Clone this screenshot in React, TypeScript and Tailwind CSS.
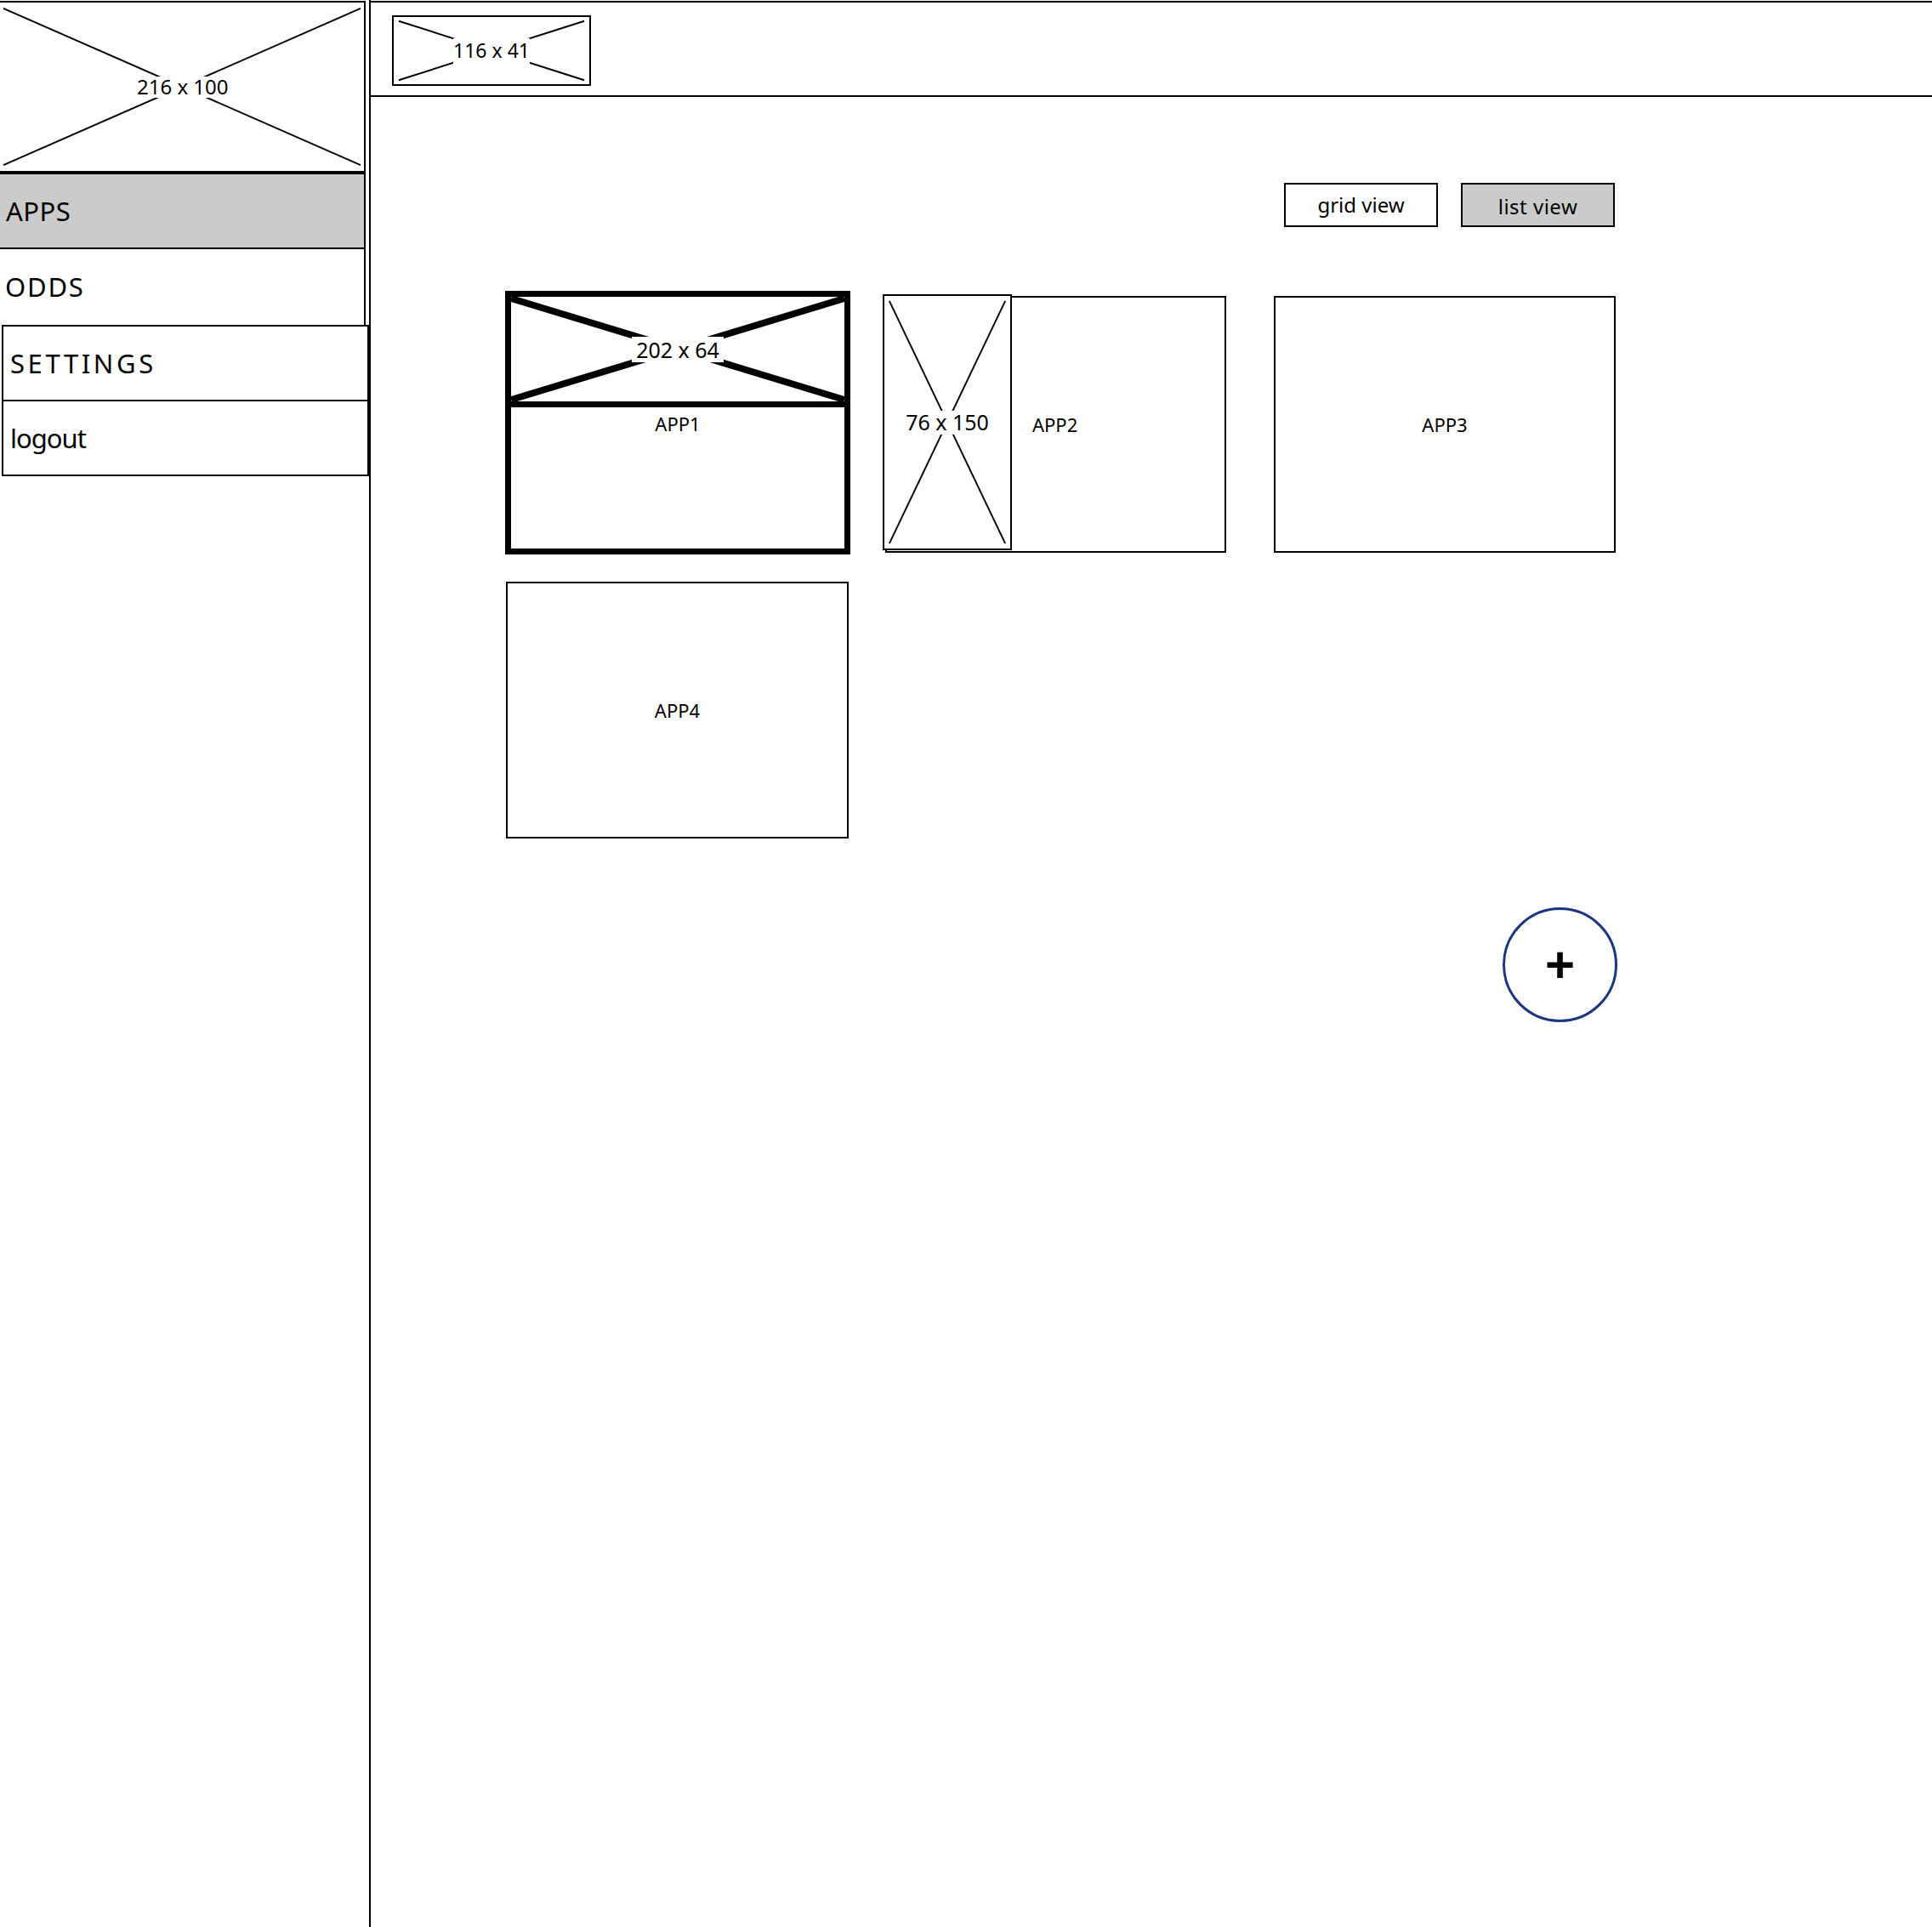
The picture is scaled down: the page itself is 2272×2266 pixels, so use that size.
import React from "react";

type PH = { w: number; h: number; ix: number; iy: number; label: string; stroke?: number; labelClass: string; boxClass: string };

function Placeholder({ w, h, ix, iy, label, stroke = 2, labelClass, boxClass }: PH) {
  return (
    <div className={`relative flex items-center justify-center shrink-0 bg-white ${boxClass}`}>
      <svg className="absolute inset-0 h-full w-full" viewBox={`0 0 ${w} ${h}`} preserveAspectRatio="none">
        <line x1={ix} y1={iy} x2={w - ix} y2={h - iy} stroke="#000" strokeWidth={stroke} />
        <line x1={w - ix} y1={iy} x2={ix} y2={h - iy} stroke="#000" strokeWidth={stroke} />
      </svg>
      <span className={`relative bg-white text-center leading-none ${labelClass}`}>{label}</span>
    </div>
  );
}

const navText = "text-[31px] leading-none text-black";

export default function App() {
  return (
    <div className="flex h-[2266px] w-[2272px] overflow-hidden bg-white text-black font-['Comic_Sans_MS','Noto_Sans',sans-serif]">
      <aside className="w-[434px] shrink-0 pt-px">
        <Placeholder
          w={428}
          h={200}
          ix={4}
          iy={7}
          label="216 x 100"
          boxClass="h-[202px] w-[430px] border-y-2 border-r-2 border-black"
          labelClass="h-[25px] w-[106px] text-[24px] whitespace-nowrap"
        />
        <div className="flex h-[90px] w-[430px] items-center border-t-2 border-r-2 border-b-2 border-black bg-[#cbcbcb] pl-[7px]">
          <span className={`${navText} tracking-[0.5px]`}>APPS</span>
        </div>
        <div className="flex h-[89px] w-[430px] items-center border-r-2 border-black pl-[6px]">
          <span className={`${navText} tracking-[1.8px]`}>ODDS</span>
        </div>
        <div className="ml-0.5 w-[432px] border-2 border-black">
          <div className="flex h-[88px] items-center border-b-2 border-black pl-2">
            <span className={`${navText} tracking-[3.6px]`}>SETTINGS</span>
          </div>
          <div className="flex h-[86px] items-center pl-2">
            <span className={`${navText} tracking-[-1px]`}>logout</span>
          </div>
        </div>
      </aside>

      <main className="flex-1 border-l-2 border-black pt-px">
        <header className="h-[113px] border-y-2 border-black pl-[25px] pt-[15px]">
          <Placeholder
            w={233}
            h={83}
            ix={6}
            iy={5}
            label="116 x 41"
            boxClass="h-[83px] w-[234px] border-2 border-black"
            labelClass="h-[30px] w-[90px] pt-[3px] text-[23px] leading-[30px] whitespace-nowrap"
          />
        </header>

        <div className="ml-[158px] w-[1308px]">
          <div className="mt-[101px] flex justify-end gap-[27px] pr-[3px]">
            <div className="flex h-[52px] w-[181px] items-center justify-center border-2 border-black text-[24px]">grid view</div>
            <div className="flex h-[52px] w-[181px] items-center justify-center border-2 border-black bg-[#cbcbcb] pt-[3px] text-[24px] tracking-[0.5px]">list view</div>
          </div>

          <div className="mt-[75px] flex items-start">
            <div className="flex h-[310px] w-[406px] flex-col border-[7px] border-black">
              <Placeholder
                w={392}
                h={125}
                ix={0}
                iy={2}
                stroke={8}
                label="202 x 64"
                boxClass="h-[130px] border-b-[7px] border-black"
                labelClass="h-[30px] w-[108px] pt-[3px] text-[25px] leading-[30px] whitespace-nowrap"
              />
              <p className="mt-[4px] text-center text-[22px] leading-[30px]">APP1</p>
            </div>

            <div className="ml-[41px] mt-[6px] flex h-[302px] w-[401px] border-2 border-black">
              <Placeholder
                w={152}
                h={300}
                ix={6}
                iy={6}
                label="76 x 150"
                boxClass="-ml-[5px] -mt-[4px] h-[301px] w-[152px] border-2 border-black"
                labelClass="h-[28px] w-[100px] pt-[1px] text-[25px] leading-[28px] whitespace-nowrap"
              />
              <span className="ml-[24px] self-center text-[22px] leading-none">APP2</span>
            </div>

            <div className="ml-[56px] mt-[6px] flex h-[302px] w-[402px] items-center justify-center border-2 border-black text-[22px]">APP3</div>
          </div>

          <div className="ml-px mt-[32px] flex h-[302px] w-[403px] items-center justify-center border-2 border-black text-[22px]">APP4</div>

          <div className="mt-[81px] flex justify-end">
            <div className="flex h-[135px] w-[135px] items-center justify-center rounded-full border-[3px] border-[#1a3682] text-[60px] font-bold leading-none font-['Liberation_Sans',sans-serif]">+</div>
          </div>
        </div>
      </main>
    </div>
  );
}
